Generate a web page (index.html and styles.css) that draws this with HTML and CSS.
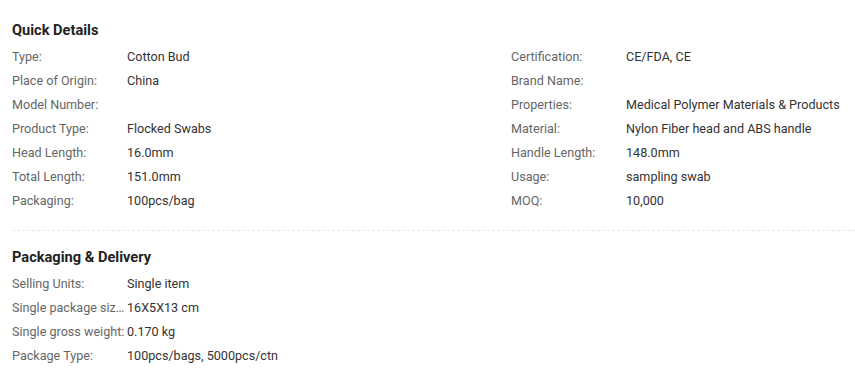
FILE: index.html
```html
<!DOCTYPE html>
<html>
<head>
<meta charset="utf-8">
<link rel="stylesheet" href="styles.css">
</head>
<body>
<div class="page">
  <section class="block">
    <h3 class="title">Quick Details</h3>
    <div class="grid">
      <div class="row"><span class="label">Type:</span><span class="value">Cotton Bud</span></div>
      <div class="row"><span class="label">Certification:</span><span class="value">CE/FDA, CE</span></div>
      <div class="row"><span class="label">Place of Origin:</span><span class="value">China</span></div>
      <div class="row"><span class="label">Brand Name:</span><span class="value"></span></div>
      <div class="row"><span class="label">Model Number:</span><span class="value"></span></div>
      <div class="row"><span class="label">Properties:</span><span class="value">Medical Polymer Materials &amp; Products</span></div>
      <div class="row"><span class="label">Product Type:</span><span class="value">Flocked Swabs</span></div>
      <div class="row"><span class="label">Material:</span><span class="value">Nylon Fiber head and ABS handle</span></div>
      <div class="row"><span class="label">Head Length:</span><span class="value">16.0mm</span></div>
      <div class="row"><span class="label">Handle Length:</span><span class="value">148.0mm</span></div>
      <div class="row"><span class="label">Total Length:</span><span class="value">151.0mm</span></div>
      <div class="row"><span class="label">Usage:</span><span class="value">sampling swab</span></div>
      <div class="row"><span class="label">Packaging:</span><span class="value">100pcs/bag</span></div>
      <div class="row"><span class="label">MOQ:</span><span class="value">10,000</span></div>
    </div>
  </section>
  <section class="block second">
    <h3 class="title">Packaging &amp; Delivery</h3>
    <div class="list">
      <div class="row"><span class="label">Selling Units:</span><span class="value">Single item</span></div>
      <div class="row"><span class="label">Single package size:</span><span class="value">16X5X13 cm</span></div>
      <div class="row"><span class="label">Single gross weight:</span><span class="value">0.170 kg</span></div>
      <div class="row"><span class="label">Package Type:</span><span class="value">100pcs/bags, 5000pcs/ctn</span></div>
    </div>
  </section>
</div>
</body>
</html>
```
FILE: styles.css
```css
html, body {
  margin: 0;
  padding: 0;
  background: #fff;
}
body {
  font-family: Roboto, "Liberation Sans", sans-serif;
  font-size: 12.6px;
  color: #333;
  overflow: hidden;
}
.page {
  width: 843px;
  padding: 18px 0 0 12px;
}
.block {
  padding-bottom: 17px;
  border-bottom: 1px dashed #e8e8e8;
}
.second {
  border-bottom: none;
  padding-top: 14px;
}
.title {
  margin: 0 0 3px;
  font-size: 14.6px;
  font-weight: 700;
  line-height: 24px;
  color: #222;
}
.grid {
  display: grid;
  grid-template-columns: 499px 1fr;
}
.row {
  display: flex;
  height: 24px;
  line-height: 24px;
}
.label {
  width: 113px;
  margin-right: 2px;
  flex: none;
  color: #666;
  white-space: nowrap;
  overflow: hidden;
  text-overflow: ellipsis;
}
.value {
  color: #333;
  white-space: nowrap;
}
```
